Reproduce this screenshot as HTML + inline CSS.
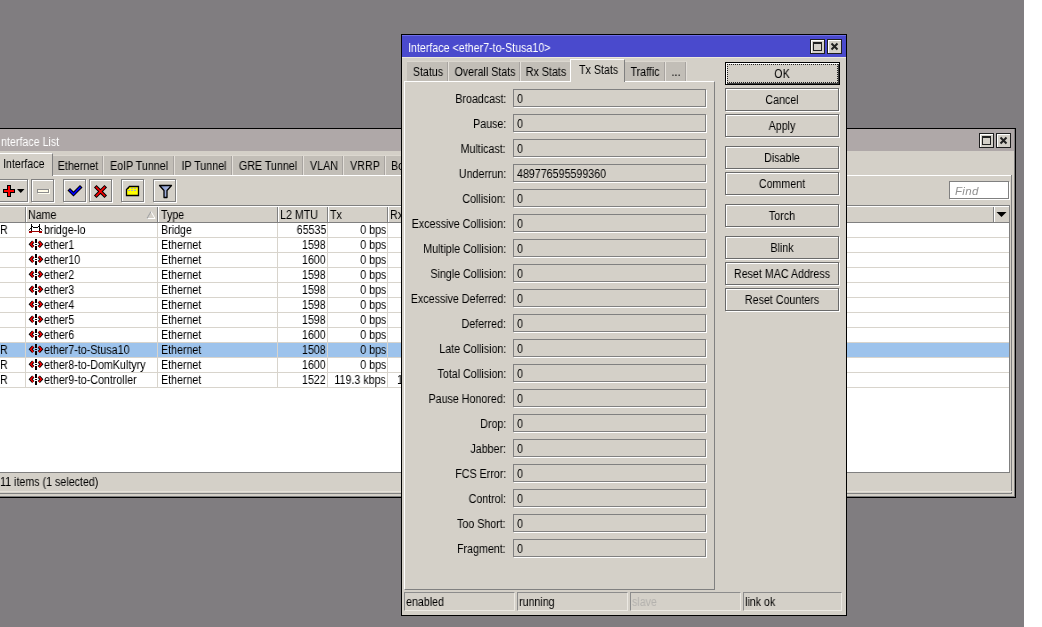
<!DOCTYPE html><html><head><meta charset="utf-8"><style>
*{margin:0;padding:0;box-sizing:border-box}
html,body{width:1042px;height:627px;overflow:hidden;background:#fff}
body{position:relative;font-family:"Liberation Sans",sans-serif;font-size:12px;color:#000}
.t,.tr,.tc{will-change:transform}
div,span,svg{position:absolute}
.t{white-space:nowrap;line-height:13px;transform:scaleX(0.89);transform-origin:0 0}
.tr{white-space:nowrap;line-height:13px;transform:scaleX(0.89);transform-origin:100% 0;text-align:right}
.tc{white-space:nowrap;line-height:13px;transform:scaleX(0.89);transform-origin:50% 0;text-align:center}
.tb{width:15px;height:15px;background:#d4d0c8;border:1px solid #1e1e1e;box-shadow:inset 1px 1px 0 #fff}
.ltab{top:156px;height:19px;background:#c2beb7;border-left:1px solid #fff;border-right:1px solid #808080}
.dtab{top:62px;height:19px;background:#c2beb7;border-left:1px solid #fff;border-right:1px solid #808080}
.btn{left:725px;width:114px;height:23px;border:1px solid #6a6a6a;box-shadow:inset 1px 1px 0 #fff,1px 1px 0 #fff;background:#d4d0c8}
.fld{left:513px;width:193px;height:18px;border:1px solid #808080;box-shadow:1px 1px 0 #fff;background:#d4d0c8}
.cell{top:592px;height:19px;border-top:1px solid #8c8c8c;border-left:1px solid #8c8c8c;border-bottom:1px solid #ece9e3;border-right:1px solid #ece9e3}
.gl{left:0;width:1009px;height:1px;background:#d8d4cc}
.cd{width:1px;background:#d8d4cc}
.tbtn{top:179px;height:23px;border:1px solid #808080;box-shadow:inset 1px 1px 0 #fff,1px 1px 0 #fff;background:#d4d0c8}
</style></head><body>
<div style="left:0;top:0;width:1024px;height:627px;background:#807d80"></div>
<div style="left:-10px;top:128px;width:1026px;height:370px;background:#d4d0c8;border:1px solid #000"></div>
<div style="left:-10px;top:129px;width:1025px;height:368px;border-right:1px solid #808080;border-bottom:1px solid #808080"></div>
<div style="left:0;top:129px;width:1014px;height:22px;background:#afa8a8"></div>
<div class="t" style="left:1px;top:136px;color:#fff;">nterface List</div>
<div class="tb" style="left:979px;top:133px"></div>
<div style="left:982px;top:136px;width:9px;height:9px;border:1px solid #222;border-top-width:2px"></div>
<div class="tb" style="left:996px;top:133px"></div>
<svg style="left:999px;top:136px" width="9" height="9" viewBox="0 0 9 9"><path d="M1.5 1.5L7.5 7.5M7.5 1.5L1.5 7.5" stroke="#222" stroke-width="2"/></svg>
<div style="left:0;top:175px;width:1012px;height:1px;background:#fff"></div>
<div style="left:1011px;top:175px;width:1px;height:319px;background:#808080"></div>
<div style="left:0;top:493px;width:1012px;height:1px;background:#808080"></div>
<div style="left:-2px;top:153px;width:55px;height:23px;background:#d4d0c8;border-top:1px solid #fff;border-right:1px solid #808080"></div>
<div class="t" style="left:0px;top:158px;left:3px;">Interface</div>
<div style="left:53px;top:155px;width:51px;height:1px;background:#dcd8d0"></div>
<div style="left:53px;top:156px;width:51px;height:19px;background:#c2beb7"></div>
<div style="left:102px;top:156px;width:1px;height:19px;background:#a8a4a0"></div>
<div style="left:103px;top:156px;width:1px;height:19px;background:#e4e0da"></div>
<div class="tc" style="left:-72.0px;width:300px;top:160px;">Ethernet</div>
<div style="left:104px;top:155px;width:71px;height:1px;background:#dcd8d0"></div>
<div style="left:104px;top:156px;width:71px;height:19px;background:#c2beb7"></div>
<div style="left:173px;top:156px;width:1px;height:19px;background:#a8a4a0"></div>
<div style="left:174px;top:156px;width:1px;height:19px;background:#e4e0da"></div>
<div class="tc" style="left:-11.0px;width:300px;top:160px;">EoIP Tunnel</div>
<div style="left:175px;top:155px;width:58px;height:1px;background:#dcd8d0"></div>
<div style="left:175px;top:156px;width:58px;height:19px;background:#c2beb7"></div>
<div style="left:231px;top:156px;width:1px;height:19px;background:#a8a4a0"></div>
<div style="left:232px;top:156px;width:1px;height:19px;background:#e4e0da"></div>
<div class="tc" style="left:53.5px;width:300px;top:160px;">IP Tunnel</div>
<div style="left:233px;top:155px;width:71px;height:1px;background:#dcd8d0"></div>
<div style="left:233px;top:156px;width:71px;height:19px;background:#c2beb7"></div>
<div style="left:302px;top:156px;width:1px;height:19px;background:#a8a4a0"></div>
<div style="left:303px;top:156px;width:1px;height:19px;background:#e4e0da"></div>
<div class="tc" style="left:118.0px;width:300px;top:160px;">GRE Tunnel</div>
<div style="left:304px;top:155px;width:40px;height:1px;background:#dcd8d0"></div>
<div style="left:304px;top:156px;width:40px;height:19px;background:#c2beb7"></div>
<div style="left:342px;top:156px;width:1px;height:19px;background:#a8a4a0"></div>
<div style="left:343px;top:156px;width:1px;height:19px;background:#e4e0da"></div>
<div class="tc" style="left:173.5px;width:300px;top:160px;">VLAN</div>
<div style="left:344px;top:155px;width:42px;height:1px;background:#dcd8d0"></div>
<div style="left:344px;top:156px;width:42px;height:19px;background:#c2beb7"></div>
<div style="left:384px;top:156px;width:1px;height:19px;background:#a8a4a0"></div>
<div style="left:385px;top:156px;width:1px;height:19px;background:#e4e0da"></div>
<div class="tc" style="left:214.5px;width:300px;top:160px;">VRRP</div>
<div style="left:386px;top:155px;width:55px;height:1px;background:#dcd8d0"></div>
<div style="left:386px;top:156px;width:55px;height:19px;background:#c2beb7"></div>
<div style="left:439px;top:156px;width:1px;height:19px;background:#a8a4a0"></div>
<div style="left:440px;top:156px;width:1px;height:19px;background:#e4e0da"></div>
<div class="t" style="left:391px;top:160px;">Bonding</div>
<div class="tbtn" style="left:-5px;width:33px"></div>
<div class="tbtn" style="left:31px;width:23px"></div>
<div class="tbtn" style="left:63px;width:23px"></div>
<div class="tbtn" style="left:89px;width:23px"></div>
<div class="tbtn" style="left:121px;width:23px"></div>
<div class="tbtn" style="left:153px;width:23px"></div>
<svg style="left:0;top:176px" width="60" height="26" viewBox="0 176 60 26" shape-rendering="crispEdges"><path d="M7 185h4v4h4v4h-4v4h-4v-4h-4v-4h4z" fill="#000"/><path d="M8 186h2v4h4v2h-4v4h-2v-4h-4v-2h4z" fill="#f00"/><path d="M17 189h7.5l-3.75 4z" fill="#000" shape-rendering="auto"/><rect x="37" y="189" width="12" height="4" fill="#8c8c8c"/><rect x="38" y="190" width="10" height="2" fill="#fffbe8"/><path d="M38 193h11v-4h1v5h-12z" fill="#fffef0"/></svg>
<svg style="left:60px;top:176px" width="60" height="26" viewBox="60 176 60 26"><path d="M70 190.5l3.5 3.5 6.5-6.5" stroke="#000" stroke-width="3.6" fill="none" stroke-linecap="square"/><path d="M70 190.5l3.5 3.5 6.5-6.5" stroke="#0000ff" stroke-width="1.6" fill="none" stroke-linecap="square"/><path d="M96.5 187.5l8 8M104.5 187.5l-8 8" stroke="#000" stroke-width="3.6" fill="none" stroke-linecap="square"/><path d="M96.5 187.5l8 8M104.5 187.5l-8 8" stroke="#f00" stroke-width="1.6" fill="none" stroke-linecap="square"/></svg>
<svg style="left:118px;top:176px" width="60" height="26" viewBox="118 176 60 26"><defs><linearGradient id="fg" x1="0" y1="0" x2="1" y2="0"><stop offset="0" stop-color="#7d90c8"/><stop offset="1" stop-color="#b8c4e8"/></linearGradient></defs><path d="M129.5 186.5h9v9h-12v-6z" fill="#ffff00" stroke="#000" stroke-width="1.3"/><path d="M131 188.5h2M134 188.5h2M128 190.5h2M131 190.5h2M134 190.5h2" stroke="#a8a8c0" stroke-width="1"/><rect x="128" y="187.5" width="1" height="1" fill="#000"/><path d="M159.5 185.5h12l-4.5 5v7h-3v-7z" fill="url(#fg)" stroke="#000" stroke-width="1.3" stroke-linejoin="round"/></svg>
<div style="left:949px;top:181px;width:60px;height:18px;background:#fff;border:1px solid #808080;box-shadow:1px 1px 0 #fff"></div>
<div class="t" style="left:955px;top:185px;color:#909090;font-style:italic;transform:none;font-size:11.5px;letter-spacing:.3px;">Find</div>
<div style="left:0;top:205px;width:1010px;height:268px;background:#fff;border-top:1px solid #808080;border-right:1px solid #808080;border-bottom:1px solid #808080"></div>
<div style="left:0;top:206px;width:1009px;height:17px;background:#d4d0c8;border-top:1px solid #fff;border-bottom:1px solid #808080"></div>
<div style="left:25px;top:207px;width:1px;height:15px;background:#808080"></div><div style="left:26px;top:207px;width:1px;height:15px;background:#fff"></div>
<div style="left:157px;top:207px;width:1px;height:15px;background:#808080"></div><div style="left:158px;top:207px;width:1px;height:15px;background:#fff"></div>
<div style="left:277px;top:207px;width:1px;height:15px;background:#808080"></div><div style="left:278px;top:207px;width:1px;height:15px;background:#fff"></div>
<div style="left:327px;top:207px;width:1px;height:15px;background:#808080"></div><div style="left:328px;top:207px;width:1px;height:15px;background:#fff"></div>
<div style="left:387px;top:207px;width:1px;height:15px;background:#808080"></div><div style="left:388px;top:207px;width:1px;height:15px;background:#fff"></div>
<div style="left:993px;top:207px;width:1px;height:15px;background:#808080"></div><div style="left:994px;top:207px;width:1px;height:15px;background:#fff"></div>
<svg style="left:996px;top:211px" width="12" height="7" viewBox="0 0 12 7"><path d="M.5 1h10l-5 5z" fill="#000"/></svg>
<div class="t" style="left:28px;top:209px;">Name</div>
<div class="t" style="left:161px;top:209px;">Type</div>
<div class="t" style="left:280px;top:209px;">L2 MTU</div>
<div class="t" style="left:330px;top:209px;">Tx</div>
<div class="t" style="left:390px;top:209px;">Rx</div>
<svg style="left:146px;top:210px" width="10" height="10" viewBox="0 0 10 10"><path d="M1 8.5h8L5 1.5z" stroke="#fff" stroke-width="1" fill="none"/><path d="M5 1.5L1 8.5" stroke="#a0a0a0" stroke-width="1.2"/></svg>
<div class="gl" style="top:237px"></div>
<div class="t" style="left:0px;top:224px;">R</div>
<svg style="left:28px;top:224px" width="16" height="12" viewBox="0 0 16 12"><g shape-rendering="crispEdges" fill="#000"><rect x="3" y="0" width="1" height="7"/><rect x="11" y="0" width="1" height="7"/><rect x="4" y="2" width="1" height="1"/><rect x="5" y="3" width="5" height="1"/><rect x="10" y="2" width="1" height="1"/></g><path d="M3.5 3.5L.8 6.3M11.5 3.5l2.7 2.8" stroke="#000" stroke-width="1" fill="none"/><g shape-rendering="crispEdges" fill="#a00000"><rect x="1" y="7" width="13" height="1"/><rect x="1" y="8" width="3" height="1"/><rect x="11" y="8" width="3" height="1"/></g></svg>
<div class="t" style="left:44px;top:224px;">bridge-lo</div>
<div class="t" style="left:161px;top:224px;">Bridge</div>
<div class="tr" style="right:716px;top:224px;">65535</div>
<div class="tr" style="right:656px;top:224px;">0 bps</div>
<div class="gl" style="top:252px"></div>
<svg style="left:28px;top:239px" width="16" height="12" viewBox="0 0 16 12"><path d="M5.2 2.6L2.7 5.3l2.5 2.7" stroke="#000" stroke-width="3.1" fill="none"/><path d="M5.2 2.6L2.7 5.3l2.5 2.7" stroke="#ff0000" stroke-width="1.4" fill="none"/><path d="M10.8 2.6l2.5 2.7-2.5 2.7" stroke="#000" stroke-width="3.1" fill="none"/><path d="M10.8 2.6l2.5 2.7-2.5 2.7" stroke="#ff0000" stroke-width="1.4" fill="none"/><rect x="7" y="0" width="2" height="4" fill="#000"/><rect x="7" y="5" width="2" height="1" fill="#000"/><rect x="7" y="7" width="2" height="4" fill="#000"/></svg>
<div class="t" style="left:44px;top:239px;">ether1</div>
<div class="t" style="left:161px;top:239px;">Ethernet</div>
<div class="tr" style="right:716px;top:239px;">1598</div>
<div class="tr" style="right:656px;top:239px;">0 bps</div>
<div class="gl" style="top:267px"></div>
<svg style="left:28px;top:254px" width="16" height="12" viewBox="0 0 16 12"><path d="M5.2 2.6L2.7 5.3l2.5 2.7" stroke="#000" stroke-width="3.1" fill="none"/><path d="M5.2 2.6L2.7 5.3l2.5 2.7" stroke="#ff0000" stroke-width="1.4" fill="none"/><path d="M10.8 2.6l2.5 2.7-2.5 2.7" stroke="#000" stroke-width="3.1" fill="none"/><path d="M10.8 2.6l2.5 2.7-2.5 2.7" stroke="#ff0000" stroke-width="1.4" fill="none"/><rect x="7" y="0" width="2" height="4" fill="#000"/><rect x="7" y="5" width="2" height="1" fill="#000"/><rect x="7" y="7" width="2" height="4" fill="#000"/></svg>
<div class="t" style="left:44px;top:254px;">ether10</div>
<div class="t" style="left:161px;top:254px;">Ethernet</div>
<div class="tr" style="right:716px;top:254px;">1600</div>
<div class="tr" style="right:656px;top:254px;">0 bps</div>
<div class="gl" style="top:282px"></div>
<svg style="left:28px;top:269px" width="16" height="12" viewBox="0 0 16 12"><path d="M5.2 2.6L2.7 5.3l2.5 2.7" stroke="#000" stroke-width="3.1" fill="none"/><path d="M5.2 2.6L2.7 5.3l2.5 2.7" stroke="#ff0000" stroke-width="1.4" fill="none"/><path d="M10.8 2.6l2.5 2.7-2.5 2.7" stroke="#000" stroke-width="3.1" fill="none"/><path d="M10.8 2.6l2.5 2.7-2.5 2.7" stroke="#ff0000" stroke-width="1.4" fill="none"/><rect x="7" y="0" width="2" height="4" fill="#000"/><rect x="7" y="5" width="2" height="1" fill="#000"/><rect x="7" y="7" width="2" height="4" fill="#000"/></svg>
<div class="t" style="left:44px;top:269px;">ether2</div>
<div class="t" style="left:161px;top:269px;">Ethernet</div>
<div class="tr" style="right:716px;top:269px;">1598</div>
<div class="tr" style="right:656px;top:269px;">0 bps</div>
<div class="gl" style="top:297px"></div>
<svg style="left:28px;top:284px" width="16" height="12" viewBox="0 0 16 12"><path d="M5.2 2.6L2.7 5.3l2.5 2.7" stroke="#000" stroke-width="3.1" fill="none"/><path d="M5.2 2.6L2.7 5.3l2.5 2.7" stroke="#ff0000" stroke-width="1.4" fill="none"/><path d="M10.8 2.6l2.5 2.7-2.5 2.7" stroke="#000" stroke-width="3.1" fill="none"/><path d="M10.8 2.6l2.5 2.7-2.5 2.7" stroke="#ff0000" stroke-width="1.4" fill="none"/><rect x="7" y="0" width="2" height="4" fill="#000"/><rect x="7" y="5" width="2" height="1" fill="#000"/><rect x="7" y="7" width="2" height="4" fill="#000"/></svg>
<div class="t" style="left:44px;top:284px;">ether3</div>
<div class="t" style="left:161px;top:284px;">Ethernet</div>
<div class="tr" style="right:716px;top:284px;">1598</div>
<div class="tr" style="right:656px;top:284px;">0 bps</div>
<div class="gl" style="top:312px"></div>
<svg style="left:28px;top:299px" width="16" height="12" viewBox="0 0 16 12"><path d="M5.2 2.6L2.7 5.3l2.5 2.7" stroke="#000" stroke-width="3.1" fill="none"/><path d="M5.2 2.6L2.7 5.3l2.5 2.7" stroke="#ff0000" stroke-width="1.4" fill="none"/><path d="M10.8 2.6l2.5 2.7-2.5 2.7" stroke="#000" stroke-width="3.1" fill="none"/><path d="M10.8 2.6l2.5 2.7-2.5 2.7" stroke="#ff0000" stroke-width="1.4" fill="none"/><rect x="7" y="0" width="2" height="4" fill="#000"/><rect x="7" y="5" width="2" height="1" fill="#000"/><rect x="7" y="7" width="2" height="4" fill="#000"/></svg>
<div class="t" style="left:44px;top:299px;">ether4</div>
<div class="t" style="left:161px;top:299px;">Ethernet</div>
<div class="tr" style="right:716px;top:299px;">1598</div>
<div class="tr" style="right:656px;top:299px;">0 bps</div>
<div class="gl" style="top:327px"></div>
<svg style="left:28px;top:314px" width="16" height="12" viewBox="0 0 16 12"><path d="M5.2 2.6L2.7 5.3l2.5 2.7" stroke="#000" stroke-width="3.1" fill="none"/><path d="M5.2 2.6L2.7 5.3l2.5 2.7" stroke="#ff0000" stroke-width="1.4" fill="none"/><path d="M10.8 2.6l2.5 2.7-2.5 2.7" stroke="#000" stroke-width="3.1" fill="none"/><path d="M10.8 2.6l2.5 2.7-2.5 2.7" stroke="#ff0000" stroke-width="1.4" fill="none"/><rect x="7" y="0" width="2" height="4" fill="#000"/><rect x="7" y="5" width="2" height="1" fill="#000"/><rect x="7" y="7" width="2" height="4" fill="#000"/></svg>
<div class="t" style="left:44px;top:314px;">ether5</div>
<div class="t" style="left:161px;top:314px;">Ethernet</div>
<div class="tr" style="right:716px;top:314px;">1598</div>
<div class="tr" style="right:656px;top:314px;">0 bps</div>
<div class="gl" style="top:342px"></div>
<svg style="left:28px;top:329px" width="16" height="12" viewBox="0 0 16 12"><path d="M5.2 2.6L2.7 5.3l2.5 2.7" stroke="#000" stroke-width="3.1" fill="none"/><path d="M5.2 2.6L2.7 5.3l2.5 2.7" stroke="#ff0000" stroke-width="1.4" fill="none"/><path d="M10.8 2.6l2.5 2.7-2.5 2.7" stroke="#000" stroke-width="3.1" fill="none"/><path d="M10.8 2.6l2.5 2.7-2.5 2.7" stroke="#ff0000" stroke-width="1.4" fill="none"/><rect x="7" y="0" width="2" height="4" fill="#000"/><rect x="7" y="5" width="2" height="1" fill="#000"/><rect x="7" y="7" width="2" height="4" fill="#000"/></svg>
<div class="t" style="left:44px;top:329px;">ether6</div>
<div class="t" style="left:161px;top:329px;">Ethernet</div>
<div class="tr" style="right:716px;top:329px;">1600</div>
<div class="tr" style="right:656px;top:329px;">0 bps</div>
<div style="left:0;top:343px;width:1009px;height:14px;background:#9dc3ec"></div>
<div class="gl" style="top:357px"></div>
<div class="t" style="left:0px;top:344px;">R</div>
<svg style="left:28px;top:344px" width="16" height="12" viewBox="0 0 16 12"><path d="M5.2 2.6L2.7 5.3l2.5 2.7" stroke="#000" stroke-width="3.1" fill="none"/><path d="M5.2 2.6L2.7 5.3l2.5 2.7" stroke="#ff0000" stroke-width="1.4" fill="none"/><path d="M10.8 2.6l2.5 2.7-2.5 2.7" stroke="#000" stroke-width="3.1" fill="none"/><path d="M10.8 2.6l2.5 2.7-2.5 2.7" stroke="#ff0000" stroke-width="1.4" fill="none"/><rect x="7" y="0" width="2" height="4" fill="#000"/><rect x="7" y="5" width="2" height="1" fill="#000"/><rect x="7" y="7" width="2" height="4" fill="#000"/></svg>
<div class="t" style="left:44px;top:344px;">ether7-to-Stusa10</div>
<div class="t" style="left:161px;top:344px;">Ethernet</div>
<div class="tr" style="right:716px;top:344px;">1508</div>
<div class="tr" style="right:656px;top:344px;">0 bps</div>
<div class="gl" style="top:372px"></div>
<div class="t" style="left:0px;top:359px;">R</div>
<svg style="left:28px;top:359px" width="16" height="12" viewBox="0 0 16 12"><path d="M5.2 2.6L2.7 5.3l2.5 2.7" stroke="#000" stroke-width="3.1" fill="none"/><path d="M5.2 2.6L2.7 5.3l2.5 2.7" stroke="#ff0000" stroke-width="1.4" fill="none"/><path d="M10.8 2.6l2.5 2.7-2.5 2.7" stroke="#000" stroke-width="3.1" fill="none"/><path d="M10.8 2.6l2.5 2.7-2.5 2.7" stroke="#ff0000" stroke-width="1.4" fill="none"/><rect x="7" y="0" width="2" height="4" fill="#000"/><rect x="7" y="5" width="2" height="1" fill="#000"/><rect x="7" y="7" width="2" height="4" fill="#000"/></svg>
<div class="t" style="left:44px;top:359px;">ether8-to-DomKultyry</div>
<div class="t" style="left:161px;top:359px;">Ethernet</div>
<div class="tr" style="right:716px;top:359px;">1600</div>
<div class="tr" style="right:656px;top:359px;">0 bps</div>
<div class="gl" style="top:387px"></div>
<div class="t" style="left:0px;top:374px;">R</div>
<svg style="left:28px;top:374px" width="16" height="12" viewBox="0 0 16 12"><path d="M5.2 2.6L2.7 5.3l2.5 2.7" stroke="#000" stroke-width="3.1" fill="none"/><path d="M5.2 2.6L2.7 5.3l2.5 2.7" stroke="#ff0000" stroke-width="1.4" fill="none"/><path d="M10.8 2.6l2.5 2.7-2.5 2.7" stroke="#000" stroke-width="3.1" fill="none"/><path d="M10.8 2.6l2.5 2.7-2.5 2.7" stroke="#ff0000" stroke-width="1.4" fill="none"/><rect x="7" y="0" width="2" height="4" fill="#000"/><rect x="7" y="5" width="2" height="1" fill="#000"/><rect x="7" y="7" width="2" height="4" fill="#000"/></svg>
<div class="t" style="left:44px;top:374px;">ether9-to-Controller</div>
<div class="t" style="left:161px;top:374px;">Ethernet</div>
<div class="tr" style="right:716px;top:374px;">1522</div>
<div class="tr" style="right:656px;top:374px;">119.3 kbps</div>
<div class="t" style="left:397px;top:374px;">1</div>
<div class="cd" style="left:25px;top:223px;height:165px"></div>
<div class="cd" style="left:157px;top:223px;height:165px"></div>
<div class="cd" style="left:277px;top:223px;height:165px"></div>
<div class="cd" style="left:327px;top:223px;height:165px"></div>
<div class="cd" style="left:387px;top:223px;height:165px"></div>
<div class="t" style="left:0px;top:476px;">11 items (1 selected)</div>
<div style="left:0;top:491px;width:1012px;height:1px;background:#e6e2da"></div>
<div style="left:401px;top:34px;width:446px;height:582px;background:#d4d0c8;border:1px solid #000"></div>
<div style="left:402px;top:35px;width:444px;height:22px;background:#4a4acd;border-top:1px solid #6e6ee6"></div>
<div class="t" style="left:408px;top:42px;color:#fff;">Interface &lt;ether7-to-Stusa10&gt;</div>
<div class="tb" style="left:810px;top:39px"></div>
<div style="left:813px;top:42px;width:9px;height:9px;border:1px solid #222;border-top-width:2px"></div>
<div class="tb" style="left:827px;top:39px"></div>
<svg style="left:830px;top:42px" width="9" height="9" viewBox="0 0 9 9"><path d="M1.5 1.5L7.5 7.5M7.5 1.5L1.5 7.5" stroke="#222" stroke-width="2"/></svg>
<div style="left:402px;top:57px;width:444px;height:1px;background:#ece8dc"></div>
<div style="left:404px;top:81px;width:311px;height:509px;border-top:1px solid #fff;border-left:1px solid #fff;border-right:1px solid #808080;border-bottom:1px solid #808080"></div>
<div style="left:407px;top:61px;width:42px;height:1px;background:#dcd8d0"></div>
<div style="left:407px;top:62px;width:42px;height:19px;background:#c2beb7"></div>
<div style="left:447px;top:62px;width:1px;height:19px;background:#a8a4a0"></div>
<div style="left:448px;top:62px;width:1px;height:19px;background:#e4e0da"></div>
<div class="tc" style="left:277.5px;width:300px;top:66px;">Status</div>
<div style="left:449px;top:61px;width:72px;height:1px;background:#dcd8d0"></div>
<div style="left:449px;top:62px;width:72px;height:19px;background:#c2beb7"></div>
<div style="left:519px;top:62px;width:1px;height:19px;background:#a8a4a0"></div>
<div style="left:520px;top:62px;width:1px;height:19px;background:#e4e0da"></div>
<div class="tc" style="left:334.5px;width:300px;top:66px;">Overall Stats</div>
<div style="left:521px;top:61px;width:50px;height:1px;background:#dcd8d0"></div>
<div style="left:521px;top:62px;width:50px;height:19px;background:#c2beb7"></div>
<div class="tc" style="left:395.5px;width:300px;top:66px;">Rx Stats</div>
<div style="left:625px;top:61px;width:41px;height:1px;background:#dcd8d0"></div>
<div style="left:625px;top:62px;width:41px;height:19px;background:#c2beb7"></div>
<div style="left:664px;top:62px;width:1px;height:19px;background:#a8a4a0"></div>
<div style="left:665px;top:62px;width:1px;height:19px;background:#e4e0da"></div>
<div class="tc" style="left:495.0px;width:300px;top:66px;">Traffic</div>
<div style="left:666px;top:61px;width:21px;height:1px;background:#dcd8d0"></div>
<div style="left:666px;top:62px;width:21px;height:19px;background:#c2beb7"></div>
<div style="left:685px;top:62px;width:1px;height:19px;background:#a8a4a0"></div>
<div style="left:686px;top:62px;width:1px;height:19px;background:#e4e0da"></div>
<div class="tc" style="left:526.0px;width:300px;top:66px;">...</div>
<div style="left:570px;top:59px;width:55px;height:23px;background:#d4d0c8;border-top:1px solid #fff;border-left:1px solid #fff;border-right:1px solid #808080"></div>
<div class="t" style="left:579px;top:64px;">Tx Stats</div>
<div class="tr" style="right:536px;top:93px;">Broadcast:</div>
<div class="fld" style="top:89px"></div>
<div class="t" style="left:517px;top:93px;">0</div>
<div class="tr" style="right:536px;top:118px;">Pause:</div>
<div class="fld" style="top:114px"></div>
<div class="t" style="left:517px;top:118px;">0</div>
<div class="tr" style="right:536px;top:143px;">Multicast:</div>
<div class="fld" style="top:139px"></div>
<div class="t" style="left:517px;top:143px;">0</div>
<div class="tr" style="right:536px;top:168px;">Underrun:</div>
<div class="fld" style="top:164px"></div>
<div class="t" style="left:517px;top:168px;">489776595599360</div>
<div class="tr" style="right:536px;top:193px;">Collision:</div>
<div class="fld" style="top:189px"></div>
<div class="t" style="left:517px;top:193px;">0</div>
<div class="tr" style="right:536px;top:218px;">Excessive Collision:</div>
<div class="fld" style="top:214px"></div>
<div class="t" style="left:517px;top:218px;">0</div>
<div class="tr" style="right:536px;top:243px;">Multiple Collision:</div>
<div class="fld" style="top:239px"></div>
<div class="t" style="left:517px;top:243px;">0</div>
<div class="tr" style="right:536px;top:268px;">Single Collision:</div>
<div class="fld" style="top:264px"></div>
<div class="t" style="left:517px;top:268px;">0</div>
<div class="tr" style="right:536px;top:293px;">Excessive Deferred:</div>
<div class="fld" style="top:289px"></div>
<div class="t" style="left:517px;top:293px;">0</div>
<div class="tr" style="right:536px;top:318px;">Deferred:</div>
<div class="fld" style="top:314px"></div>
<div class="t" style="left:517px;top:318px;">0</div>
<div class="tr" style="right:536px;top:343px;">Late Collision:</div>
<div class="fld" style="top:339px"></div>
<div class="t" style="left:517px;top:343px;">0</div>
<div class="tr" style="right:536px;top:368px;">Total Collision:</div>
<div class="fld" style="top:364px"></div>
<div class="t" style="left:517px;top:368px;">0</div>
<div class="tr" style="right:536px;top:393px;">Pause Honored:</div>
<div class="fld" style="top:389px"></div>
<div class="t" style="left:517px;top:393px;">0</div>
<div class="tr" style="right:536px;top:418px;">Drop:</div>
<div class="fld" style="top:414px"></div>
<div class="t" style="left:517px;top:418px;">0</div>
<div class="tr" style="right:536px;top:443px;">Jabber:</div>
<div class="fld" style="top:439px"></div>
<div class="t" style="left:517px;top:443px;">0</div>
<div class="tr" style="right:536px;top:468px;">FCS Error:</div>
<div class="fld" style="top:464px"></div>
<div class="t" style="left:517px;top:468px;">0</div>
<div class="tr" style="right:536px;top:493px;">Control:</div>
<div class="fld" style="top:489px"></div>
<div class="t" style="left:517px;top:493px;">0</div>
<div class="tr" style="right:536px;top:518px;">Too Short:</div>
<div class="fld" style="top:514px"></div>
<div class="t" style="left:517px;top:518px;">0</div>
<div class="tr" style="right:536px;top:543px;">Fragment:</div>
<div class="fld" style="top:539px"></div>
<div class="t" style="left:517px;top:543px;">0</div>
<div class="btn" style="top:62px;border-color:#000;box-shadow:inset 1px 1px 0 #fff,inset -1px -1px 0 #404040;height:23px;width:115px"></div>
<div style="left:727px;top:64px;width:111px;height:19px;border:1px dotted #222"></div>
<div class="tc" style="left:632px;width:300px;top:68px;">OK</div>
<div class="btn" style="top:88px"></div>
<div class="tc" style="left:632px;width:300px;top:94px;">Cancel</div>
<div class="btn" style="top:114px"></div>
<div class="tc" style="left:632px;width:300px;top:120px;">Apply</div>
<div class="btn" style="top:146px"></div>
<div class="tc" style="left:632px;width:300px;top:152px;">Disable</div>
<div class="btn" style="top:172px"></div>
<div class="tc" style="left:632px;width:300px;top:178px;">Comment</div>
<div class="btn" style="top:204px"></div>
<div class="tc" style="left:632px;width:300px;top:210px;">Torch</div>
<div class="btn" style="top:236px"></div>
<div class="tc" style="left:632px;width:300px;top:242px;">Blink</div>
<div class="btn" style="top:262px"></div>
<div class="tc" style="left:632px;width:300px;top:268px;">Reset MAC Address</div>
<div class="btn" style="top:288px"></div>
<div class="tc" style="left:632px;width:300px;top:294px;">Reset Counters</div>
<div class="cell" style="left:404px;width:111px"></div>
<div class="t" style="left:406px;top:596px;color:#000;">enabled</div>
<div class="cell" style="left:517px;width:111px"></div>
<div class="t" style="left:519px;top:596px;color:#000;">running</div>
<div class="cell" style="left:630px;width:111px"></div>
<div class="t" style="left:632px;top:596px;color:#b4b2ae;">slave</div>
<div class="cell" style="left:743px;width:99px"></div>
<div class="t" style="left:745px;top:596px;color:#000;">link ok</div>
</body></html>
